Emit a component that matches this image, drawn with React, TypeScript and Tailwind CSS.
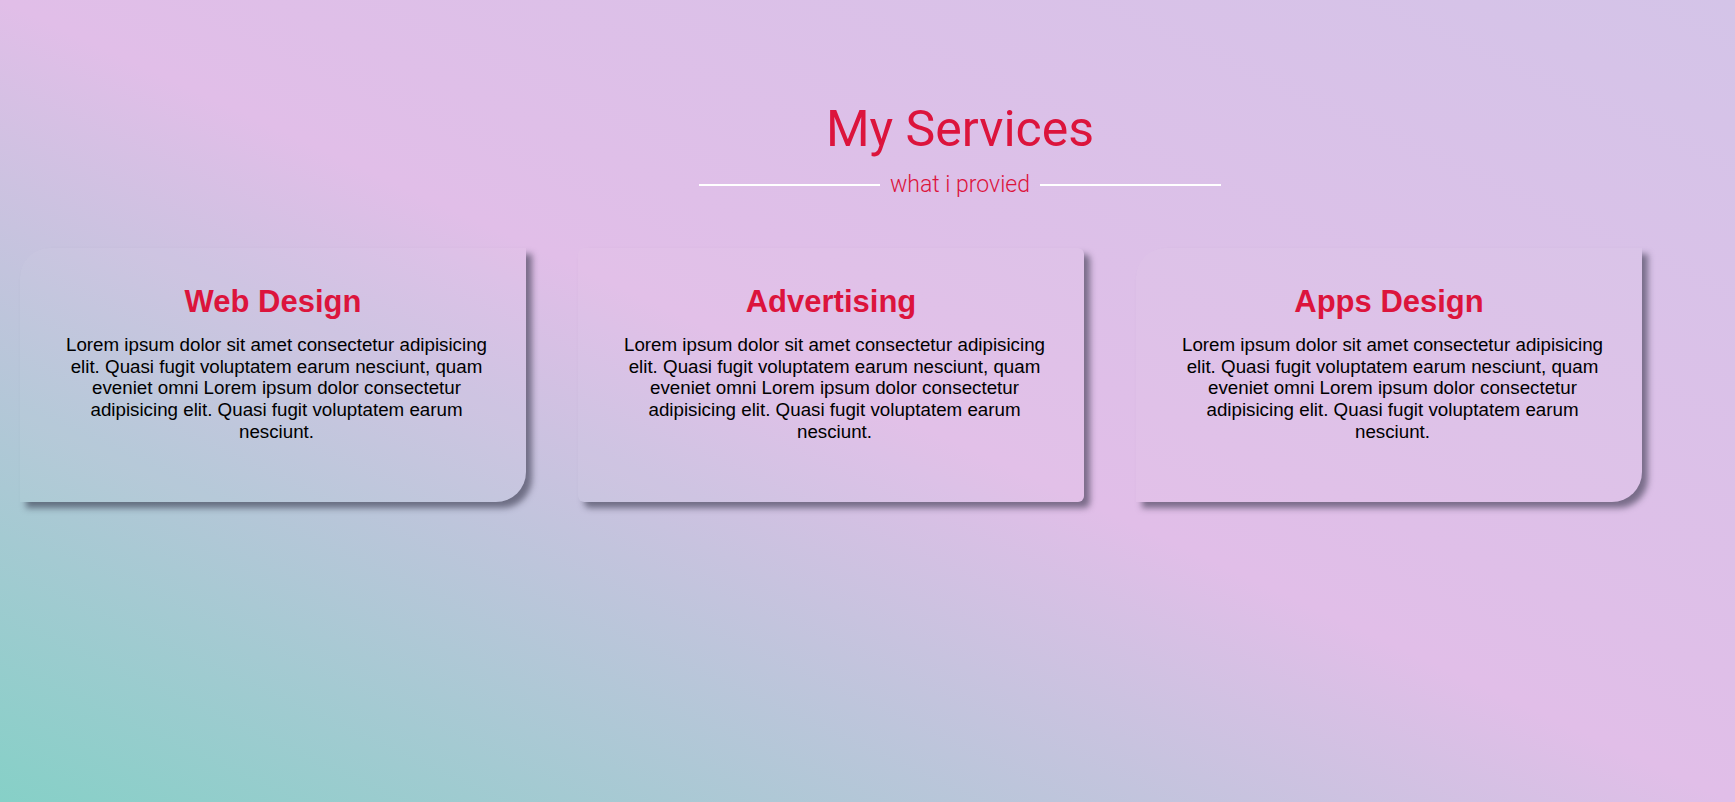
const services = [
  { title: "Web Design", shape: "rounded-tl-[30px] rounded-br-[30px]" },
  { title: "Advertising", shape: "rounded-md" },
  { title: "Apps Design", shape: "rounded-tl-[30px] rounded-br-[30px]" },
];

const lorem =
  "Lorem ipsum dolor sit amet consectetur adipisicing elit. Quasi fugit voluptatem earum nesciunt, quam eveniet omni Lorem ipsum dolor consectetur adipisicing elit. Quasi fugit voluptatem earum nesciunt.";

export default function App() {
  return (
    <div className="w-full h-[802px] overflow-hidden bg-[linear-gradient(to_top_right,#86d0c7_0%,#e1bee8_50%,#d4c4e8_100%)]">
      {/* heading */}
      <div className="flex flex-col items-center pl-[185px] pt-[104px]">
        <h1 className="font-['Roboto',sans-serif] text-[50px] leading-none font-normal text-[#dc143c]">
          My Services
        </h1>
        <div className="flex items-center gap-[10px] mt-[19px]">
          <span className="w-[181px] h-[2px] bg-white"></span>
          <p className="font-['Roboto',sans-serif] font-light text-[23px] leading-none text-[#dc143c]">
            what i provied
          </p>
          <span className="w-[181px] h-[2px] bg-white"></span>
        </div>
      </div>

      {/* cards */}
      <div className="flex gap-[52px] pl-[20px] mt-[52px]">
        {services.map((s) => (
          <div
            key={s.title}
            className={`w-[506px] h-[254px] px-[33px] pt-[35px] bg-white/[0.04] shadow-[6px_6px_6px_rgba(40,40,60,0.55)] text-center font-['Liberation_Sans',Arial,sans-serif] ${s.shape}`}
          >
            <h2 className="text-[31px] font-bold text-[#dc143c] leading-tight">
              {s.title}
            </h2>
            <p className="mt-[12px] pl-[7px] text-[18.75px] leading-[21.8px] text-black">
              {lorem}
            </p>
          </div>
        ))}
      </div>
    </div>
  );
}
